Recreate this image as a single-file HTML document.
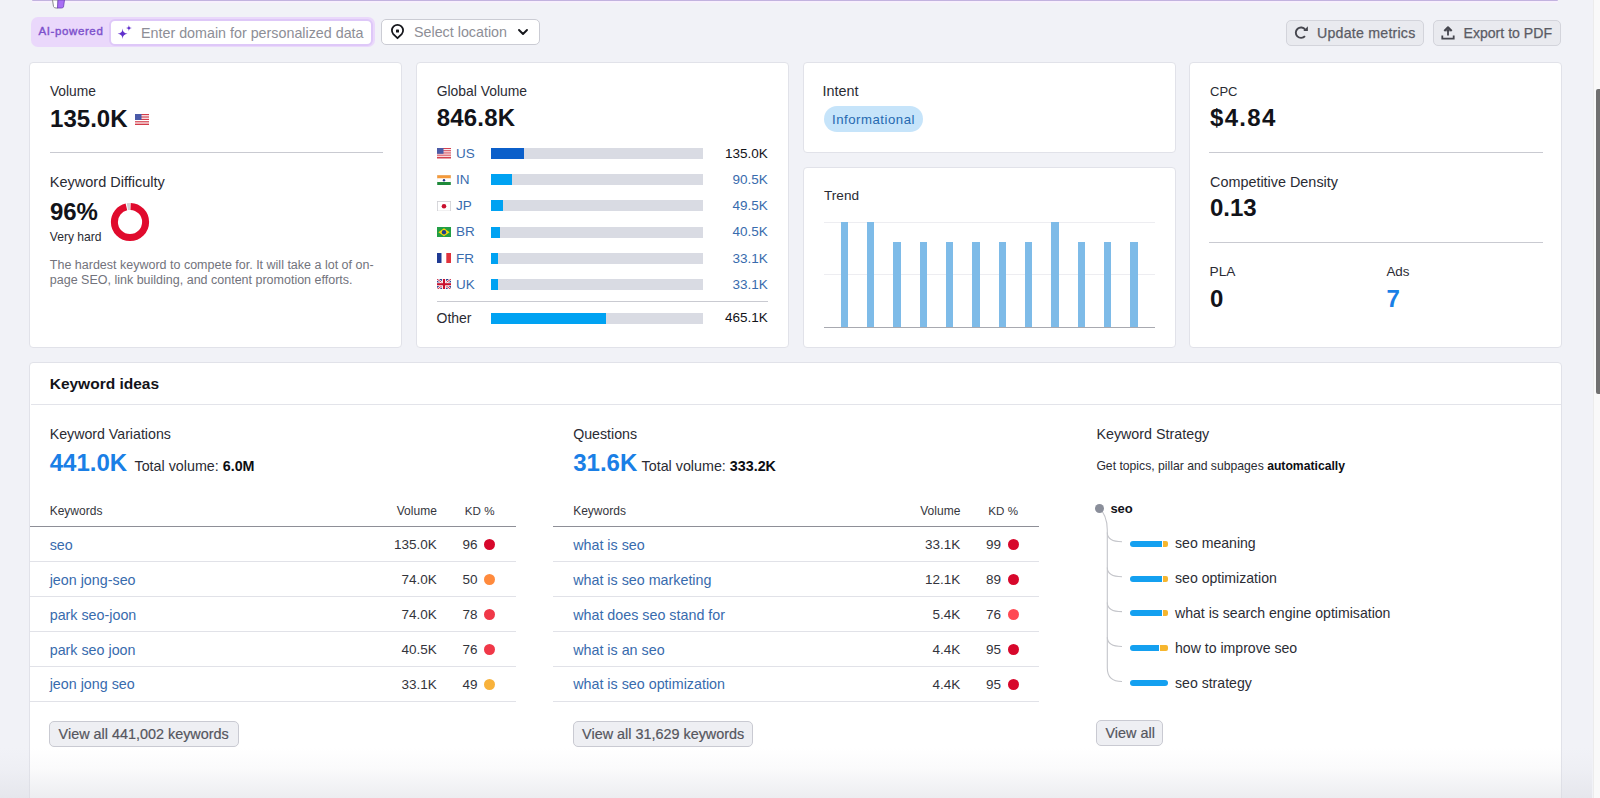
<!DOCTYPE html>
<html><head><meta charset="utf-8"><style>
html,body{margin:0;padding:0;width:1600px;height:798px;overflow:hidden;background:#f1f2f7;}
body{position:relative;font-family:"Liberation Sans", sans-serif;}
.t{position:absolute;white-space:nowrap;line-height:1;}
b{font-weight:700;}
</style></head><body>
<div style="position:absolute;left:32px;top:0px;width:1526px;height:1px;background:#c2b3df;border-radius:0 0 4px 4px;"></div>
<div style="position:absolute;left:32px;top:1px;width:1526px;height:1.5px;background:#f8f0fd;"></div>
<svg style="position:absolute;left:50px;top:0" width="18" height="10"><path d="M2.5 0 L3.5 6.5 Q4 8 6 8 L8 8 L8 0Z" fill="#fff" stroke="#8c8c90" stroke-width="1"/><path d="M8 0 L14.5 0 L13.5 7 Q13 8 11.5 8 L7.5 8Z" fill="#a86ef5" stroke="#6d42b5" stroke-width="0.8"/></svg>
<div style="position:absolute;left:30.5px;top:16.5px;width:344px;height:30px;background:#ead8fb;border-radius:7px;"></div>
<div class="t" style="left:38.40px;top:25.77px;font-size:11.5px;font-weight:400;color:#7d51cc;-webkit-text-stroke:0.4px #7d51cc;letter-spacing:0.62px;">AI-powered</div>
<div style="position:absolute;left:108.5px;top:18.5px;width:264.5px;height:27px;background:#fff;border:2px solid #dec8f8;border-radius:6px;box-sizing:border-box;"></div>
<svg style="position:absolute;left:116px;top:24px" width="18" height="16" viewBox="0 0 18 16"><path d="M6.6 4.6 Q6.8 9.6 11.6 9.8 Q6.8 10.0 6.6 15.0 Q6.4 10.0 1.6 9.8 Q6.4 9.6 6.6 4.6Z" fill="#6030cc"/><path d="M12.9 1.0 Q13.0 3.9 16.0 4.1 Q13.0 4.3 12.9 7.2 Q12.8 4.3 9.8 4.1 Q12.8 3.9 12.9 1.0Z" fill="#6030cc"/></svg>
<div class="t" style="left:141.00px;top:26.00px;font-size:14.3px;font-weight:400;color:#8d8e96;">Enter domain for personalized data</div>
<div style="position:absolute;left:381.2px;top:18.5px;width:158.6px;height:26.8px;background:#fff;border:1px solid #cbccd4;border-radius:5px;box-sizing:border-box;"></div>
<svg style="position:absolute;left:389px;top:23px" width="17" height="17" viewBox="0 0 17 17"><path d="M8.5 15.2 L4.3 11.1 A5.6 5.6 0 1 1 12.7 11.1 Z" fill="none" stroke="#16171c" stroke-width="1.8" stroke-linejoin="round"/><rect x="7" y="6.6" width="3" height="3" rx="0.6" fill="#16171c"/></svg>
<div class="t" style="left:414.00px;top:24.70px;font-size:14.3px;font-weight:400;color:#8d8e96;">Select location</div>
<svg style="position:absolute;left:517px;top:28px" width="12" height="8" viewBox="0 0 12 8"><path d="M2 2 L6 6 L10 2" fill="none" stroke="#16171c" stroke-width="1.9" stroke-linecap="round" stroke-linejoin="round"/></svg>
<div style="position:absolute;left:1286.2px;top:19.5px;width:138.3px;height:26.5px;background:#e9eaef;border:1px solid #d3d4db;border-radius:5px;box-sizing:border-box;"></div>
<svg style="position:absolute;left:1293px;top:25px" width="16" height="16" viewBox="0 0 16 16"><path d="M11.98 11.04 A5.2 5.2 0 1 1 12.2 4.6" fill="none" stroke="#45464e" stroke-width="1.9"/><path d="M10.3 6.0 L14.9 6.0 L14.9 1.3Z" fill="#45464e"/></svg>
<div class="t" style="left:1317.00px;top:26.48px;font-size:14.2px;font-weight:400;color:#5b5c65;letter-spacing:0.22px;-webkit-text-stroke:0.25px #5b5c65;">Update metrics</div>
<div style="position:absolute;left:1433px;top:19.5px;width:127.5px;height:26.5px;background:#e9eaef;border:1px solid #d3d4db;border-radius:5px;box-sizing:border-box;"></div>
<svg style="position:absolute;left:1440px;top:25px" width="16" height="16" viewBox="0 0 16 16"><path d="M8 10.6 L8 4.5" fill="none" stroke="#45464e" stroke-width="1.8"/><path d="M4.3 6.0 L8 2.2 L11.7 6.0" fill="none" stroke="#45464e" stroke-width="2" stroke-linejoin="round"/><path d="M5.7 6.2 L8 3.6 L10.3 6.2Z" fill="#45464e"/><path d="M2.3 10.4 L2.3 13.6 L13.7 13.6 L13.7 10.4" fill="none" stroke="#45464e" stroke-width="1.8"/></svg>
<div class="t" style="left:1463.50px;top:26.36px;font-size:14.1px;font-weight:400;color:#5b5c65;-webkit-text-stroke:0.25px #5b5c65;">Export to PDF</div>
<div style="position:absolute;left:29px;top:62px;width:373px;height:286px;background:#fff;border:1px solid #e1e2e9;border-radius:4px;box-sizing:border-box;"></div>
<div style="position:absolute;left:416px;top:62px;width:373px;height:286px;background:#fff;border:1px solid #e1e2e9;border-radius:4px;box-sizing:border-box;"></div>
<div style="position:absolute;left:803px;top:62px;width:373px;height:91px;background:#fff;border:1px solid #e1e2e9;border-radius:4px;box-sizing:border-box;"></div>
<div style="position:absolute;left:803px;top:167px;width:373px;height:181px;background:#fff;border:1px solid #e1e2e9;border-radius:4px;box-sizing:border-box;"></div>
<div style="position:absolute;left:1189px;top:62px;width:373px;height:286px;background:#fff;border:1px solid #e1e2e9;border-radius:4px;box-sizing:border-box;"></div>
<div class="t" style="left:49.90px;top:84.72px;font-size:13.8px;font-weight:400;color:#2a2b33;">Volume</div>
<div class="t" style="left:50.10px;top:106.58px;font-size:24px;font-weight:700;color:#121319;">135.0K</div>
<svg style="position:absolute;left:134.5px;top:113.8px" width="14" height="11" viewBox="0 0 14 11"><rect width="14" height="11" fill="#fff"/><g fill="#d33c4a"><rect y="0" width="14" height="1.2"/><rect y="2.4" width="14" height="1.2"/><rect y="4.8" width="14" height="1.2"/><rect y="7.2" width="14" height="1.2"/><rect y="9.6" width="14" height="1.4"/></g><rect width="6.5" height="6" fill="#4a5aa8"/></svg>
<div style="position:absolute;left:49.5px;top:152px;width:333px;height:1px;background:#c9cad1;"></div>
<div class="t" style="left:49.80px;top:174.53px;font-size:14.5px;font-weight:400;color:#2a2b33;">Keyword Difficulty</div>
<div class="t" style="left:49.90px;top:200.08px;font-size:24px;font-weight:700;color:#121319;">96%</div>
<div class="t" style="left:49.80px;top:230.86px;font-size:12.1px;font-weight:400;color:#2a2b33;">Very hard</div>
<svg style="position:absolute;left:109.8px;top:202.2px" width="40" height="40" viewBox="0 0 40 40"><circle cx="20" cy="20" r="15.6" fill="none" stroke="#e00b2d" stroke-width="7" stroke-dasharray="93.1 100" stroke-dashoffset="-0.6" transform="rotate(-90 20 20)"/><circle cx="20" cy="20" r="15.6" fill="none" stroke="#cfcfd3" stroke-width="7" stroke-dasharray="2.6 100" stroke-dashoffset="-94.7" transform="rotate(-90 20 20)"/></svg>
<div class="t" style="left:49.80px;top:258.72px;font-size:12.5px;font-weight:400;color:#72737c;">The hardest keyword to compete for. It will take a lot of on-</div>
<div class="t" style="left:49.80px;top:274.02px;font-size:12.5px;font-weight:400;color:#72737c;">page SEO, link building, and content promotion efforts.</div>
<div class="t" style="left:436.70px;top:84.63px;font-size:13.9px;font-weight:400;color:#2a2b33;">Global Volume</div>
<div class="t" style="left:436.70px;top:105.78px;font-size:24px;font-weight:700;color:#121319;letter-spacing:0.2px;">846.8K</div>
<svg style="position:absolute;left:437px;top:148.45px" width="14" height="10.5" viewBox="0 0 14 10.5"><rect width="14" height="10.5" fill="#fff"/><g fill="#d44150"><rect y="0" width="14" height="1.1"/><rect y="2.2" width="14" height="1.1"/><rect y="4.4" width="14" height="1.1"/><rect y="6.6" width="14" height="1.1"/><rect y="8.8" width="14" height="1.7"/></g><rect width="6.5" height="5.8" fill="#4b5ba7"/></svg>
<div class="t" style="left:456.10px;top:147.17px;font-size:13.5px;font-weight:400;color:#386bad;">US</div>
<div style="position:absolute;left:490.7px;top:148.2px;width:212.3px;height:11px;background:#d9dbe3;"></div>
<div style="position:absolute;left:490.7px;top:148.2px;width:33.3px;height:11px;background:#0b5fca;"></div>
<div class="t" style="right:832.20px;top:147.17px;font-size:13.5px;font-weight:400;color:#121319;">135.0K</div>
<svg style="position:absolute;left:437px;top:174.55px" width="14" height="10.5" viewBox="0 0 14 10.5"><rect width="14" height="3.5" fill="#f59a3a"/><rect y="3.5" width="14" height="3.5" fill="#fff"/><rect y="7" width="14" height="3.5" fill="#1e8a3a"/><circle cx="7" cy="5.25" r="1.2" fill="#2b3a8c"/><rect width="14" height="10.5" fill="none" stroke="#e2e2e2" stroke-width="0.5"/></svg>
<div class="t" style="left:456.10px;top:173.27px;font-size:13.5px;font-weight:400;color:#386bad;">IN</div>
<div style="position:absolute;left:490.7px;top:174.3px;width:212.3px;height:11px;background:#d9dbe3;"></div>
<div style="position:absolute;left:490.7px;top:174.3px;width:21.5px;height:11px;background:#00a2f2;"></div>
<div class="t" style="right:832.20px;top:173.27px;font-size:13.5px;font-weight:400;color:#386bad;">90.5K</div>
<svg style="position:absolute;left:437px;top:200.65px" width="14" height="10.5" viewBox="0 0 14 10.5"><rect x="0.4" y="0.4" width="13.2" height="9.7" fill="#fff" stroke="#cfcfd4" stroke-width="0.8"/><circle cx="7" cy="5.25" r="2.3" fill="#c8102e"/></svg>
<div class="t" style="left:456.10px;top:199.37px;font-size:13.5px;font-weight:400;color:#386bad;">JP</div>
<div style="position:absolute;left:490.7px;top:200.4px;width:212.3px;height:11px;background:#d9dbe3;"></div>
<div style="position:absolute;left:490.7px;top:200.4px;width:12.4px;height:11px;background:#00a2f2;"></div>
<div class="t" style="right:832.20px;top:199.37px;font-size:13.5px;font-weight:400;color:#386bad;">49.5K</div>
<svg style="position:absolute;left:437px;top:226.75px" width="14" height="10.5" viewBox="0 0 14 10.5"><rect width="14" height="10.5" fill="#229e45"/><path d="M7 1.3 L12.6 5.25 L7 9.2 L1.4 5.25Z" fill="#f8d70a"/><circle cx="7" cy="5.25" r="2.2" fill="#1f3f8a"/></svg>
<div class="t" style="left:456.10px;top:225.47px;font-size:13.5px;font-weight:400;color:#386bad;">BR</div>
<div style="position:absolute;left:490.7px;top:226.5px;width:212.3px;height:11px;background:#d9dbe3;"></div>
<div style="position:absolute;left:490.7px;top:226.5px;width:9.2px;height:11px;background:#00a2f2;"></div>
<div class="t" style="right:832.20px;top:225.47px;font-size:13.5px;font-weight:400;color:#386bad;">40.5K</div>
<svg style="position:absolute;left:437px;top:252.85px" width="14" height="10.5" viewBox="0 0 14 10.5"><rect width="4.7" height="10.5" fill="#1f3a93"/><rect x="4.7" width="4.6" height="10.5" fill="#fff"/><rect x="9.3" width="4.7" height="10.5" fill="#e0323c"/></svg>
<div class="t" style="left:456.10px;top:251.57px;font-size:13.5px;font-weight:400;color:#386bad;">FR</div>
<div style="position:absolute;left:490.7px;top:252.6px;width:212.3px;height:11px;background:#d9dbe3;"></div>
<div style="position:absolute;left:490.7px;top:252.6px;width:7.3px;height:11px;background:#00a2f2;"></div>
<div class="t" style="right:832.20px;top:251.57px;font-size:13.5px;font-weight:400;color:#386bad;">33.1K</div>
<svg style="position:absolute;left:437px;top:278.95px" width="14" height="10.5" viewBox="0 0 14 10.5"><rect width="14" height="10.5" fill="#2b3a8a"/><path d="M0 0 L14 10.5 M14 0 L0 10.5" stroke="#fff" stroke-width="2.4"/><path d="M0 0 L14 10.5 M14 0 L0 10.5" stroke="#c8102e" stroke-width="0.9"/><rect x="4.9" width="4.2" height="10.5" fill="#fff"/><rect y="3.4" width="14" height="3.7" fill="#fff"/><rect x="5.9" width="2.2" height="10.5" fill="#c8102e"/><rect y="4.2" width="14" height="2.1" fill="#c8102e"/></svg>
<div class="t" style="left:456.10px;top:277.67px;font-size:13.5px;font-weight:400;color:#386bad;">UK</div>
<div style="position:absolute;left:490.7px;top:278.7px;width:212.3px;height:11px;background:#d9dbe3;"></div>
<div style="position:absolute;left:490.7px;top:278.7px;width:7.3px;height:11px;background:#00a2f2;"></div>
<div class="t" style="right:832.20px;top:277.67px;font-size:13.5px;font-weight:400;color:#386bad;">33.1K</div>
<div style="position:absolute;left:436.5px;top:301px;width:331.5px;height:1px;background:#c9cad1;"></div>
<div class="t" style="left:436.50px;top:311.05px;font-size:14px;font-weight:400;color:#2a2b33;">Other</div>
<div style="position:absolute;left:490.7px;top:312.6px;width:212.3px;height:11px;background:#d9dbe3;"></div>
<div style="position:absolute;left:490.7px;top:312.6px;width:115.6px;height:11px;background:#00a2f2;"></div>
<div class="t" style="right:832.20px;top:311.47px;font-size:13.5px;font-weight:400;color:#121319;">465.1K</div>
<div class="t" style="left:822.60px;top:84.21px;font-size:14.4px;font-weight:400;color:#2a2b33;">Intent</div>
<div style="position:absolute;left:823.6px;top:105.9px;width:99.8px;height:26.3px;background:#c6e4fa;border-radius:14px;"></div>
<div class="t" style="left:832.00px;top:113.03px;font-size:13.2px;font-weight:400;color:#2569b0;letter-spacing:0.52px;">Informational</div>
<div class="t" style="left:824.00px;top:189.49px;font-size:13.6px;font-weight:400;color:#2a2b33;">Trend</div>
<div style="position:absolute;left:823.6px;top:221.5px;width:331.4px;height:1px;background:#ededf1;"></div>
<div style="position:absolute;left:823.6px;top:274px;width:331.4px;height:1px;background:#ededf1;"></div>
<div style="position:absolute;left:840.7px;top:221.7px;width:7.4px;height:105.3px;background:#7ebbe8;"></div>
<div style="position:absolute;left:867.04px;top:221.7px;width:7.4px;height:105.3px;background:#7ebbe8;"></div>
<div style="position:absolute;left:893.38px;top:242.1px;width:7.4px;height:84.9px;background:#7ebbe8;"></div>
<div style="position:absolute;left:919.72px;top:242.1px;width:7.4px;height:84.9px;background:#7ebbe8;"></div>
<div style="position:absolute;left:946.06px;top:242.1px;width:7.4px;height:84.9px;background:#7ebbe8;"></div>
<div style="position:absolute;left:972.4px;top:242.1px;width:7.4px;height:84.9px;background:#7ebbe8;"></div>
<div style="position:absolute;left:998.74px;top:242.1px;width:7.4px;height:84.9px;background:#7ebbe8;"></div>
<div style="position:absolute;left:1025.08px;top:242.1px;width:7.4px;height:84.9px;background:#7ebbe8;"></div>
<div style="position:absolute;left:1051.42px;top:221.7px;width:7.4px;height:105.3px;background:#7ebbe8;"></div>
<div style="position:absolute;left:1077.76px;top:242.1px;width:7.4px;height:84.9px;background:#7ebbe8;"></div>
<div style="position:absolute;left:1104.1px;top:242.1px;width:7.4px;height:84.9px;background:#7ebbe8;"></div>
<div style="position:absolute;left:1130.44px;top:242.1px;width:7.4px;height:84.9px;background:#7ebbe8;"></div>
<div style="position:absolute;left:823.6px;top:326.5px;width:331.4px;height:1px;background:#a8a9b0;"></div>
<div class="t" style="left:1210.00px;top:85.40px;font-size:13px;font-weight:400;color:#2a2b33;">CPC</div>
<div class="t" style="left:1210.00px;top:106.38px;font-size:24px;font-weight:700;color:#121319;letter-spacing:1.3px;">$4.84</div>
<div style="position:absolute;left:1209px;top:152px;width:334px;height:1px;background:#c9cad1;"></div>
<div class="t" style="left:1210.00px;top:174.61px;font-size:14.4px;font-weight:400;color:#2a2b33;">Competitive Density</div>
<div class="t" style="left:1210.00px;top:195.98px;font-size:24px;font-weight:700;color:#121319;">0.13</div>
<div style="position:absolute;left:1209px;top:242px;width:334px;height:1px;background:#c9cad1;"></div>
<div class="t" style="left:1209.60px;top:265.20px;font-size:13.7px;font-weight:400;color:#2a2b33;">PLA</div>
<div class="t" style="left:1386.40px;top:265.46px;font-size:13.4px;font-weight:400;color:#2a2b33;">Ads</div>
<div class="t" style="left:1210.00px;top:286.88px;font-size:24px;font-weight:700;color:#121319;">0</div>
<div class="t" style="left:1386.40px;top:286.88px;font-size:24px;font-weight:700;color:#1a7fe6;">7</div>
<div style="position:absolute;left:29px;top:362px;width:1533px;height:460px;background:#fff;border:1px solid #e1e2e9;border-radius:4px;box-sizing:border-box;"></div>
<div class="t" style="left:49.70px;top:376.38px;font-size:15.5px;font-weight:700;color:#121319;">Keyword ideas</div>
<div style="position:absolute;left:30.5px;top:404px;width:1530px;height:1px;background:#e3e4ea;"></div>
<div class="t" style="left:49.70px;top:426.98px;font-size:14.2px;font-weight:400;color:#2a2b33;">Keyword Variations</div>
<div class="t" style="left:49.70px;top:450.68px;font-size:24px;font-weight:700;color:#1a7fe6;">441.0K</div>
<div class="t" style="left:49.70px;top:504.54px;font-size:12px;font-weight:400;color:#34353c;">Keywords</div>
<div class="t" style="right:1163.20px;top:504.54px;font-size:12px;font-weight:400;color:#34353c;">Volume</div>
<div class="t" style="right:1105.50px;top:504.88px;font-size:11.6px;font-weight:400;color:#34353c;">KD %</div>
<div style="position:absolute;left:30px;top:526px;width:486px;height:1.2px;background:#8e8f97;"></div>
<div class="t" style="left:49.70px;top:537.80px;font-size:14.3px;font-weight:400;color:#386bad;">seo</div>
<div class="t" style="right:1163.20px;top:538.27px;font-size:13.5px;font-weight:400;color:#33343c;">135.0K</div>
<div class="t" style="right:1122.50px;top:538.27px;font-size:13.5px;font-weight:400;color:#33343c;">96</div>
<div style="position:absolute;left:484px;top:539.0px;width:11px;height:11px;background:#d7072b;border-radius:50%;"></div>
<div style="position:absolute;left:30px;top:561.4px;width:486px;height:1px;background:#e1e2e8;"></div>
<div class="t" style="left:49.70px;top:572.70px;font-size:14.3px;font-weight:400;color:#386bad;">jeon jong-seo</div>
<div class="t" style="right:1163.20px;top:573.17px;font-size:13.5px;font-weight:400;color:#33343c;">74.0K</div>
<div class="t" style="right:1122.50px;top:573.17px;font-size:13.5px;font-weight:400;color:#33343c;">50</div>
<div style="position:absolute;left:484px;top:573.9px;width:11px;height:11px;background:#ff8a3d;border-radius:50%;"></div>
<div style="position:absolute;left:30px;top:596.3px;width:486px;height:1px;background:#e1e2e8;"></div>
<div class="t" style="left:49.70px;top:607.60px;font-size:14.3px;font-weight:400;color:#386bad;">park seo-joon</div>
<div class="t" style="right:1163.20px;top:608.07px;font-size:13.5px;font-weight:400;color:#33343c;">74.0K</div>
<div class="t" style="right:1122.50px;top:608.07px;font-size:13.5px;font-weight:400;color:#33343c;">78</div>
<div style="position:absolute;left:484px;top:608.8px;width:11px;height:11px;background:#f03848;border-radius:50%;"></div>
<div style="position:absolute;left:30px;top:631.2px;width:486px;height:1px;background:#e1e2e8;"></div>
<div class="t" style="left:49.70px;top:642.50px;font-size:14.3px;font-weight:400;color:#386bad;">park seo joon</div>
<div class="t" style="right:1163.20px;top:642.97px;font-size:13.5px;font-weight:400;color:#33343c;">40.5K</div>
<div class="t" style="right:1122.50px;top:642.97px;font-size:13.5px;font-weight:400;color:#33343c;">76</div>
<div style="position:absolute;left:484px;top:643.7px;width:11px;height:11px;background:#f03848;border-radius:50%;"></div>
<div style="position:absolute;left:30px;top:666.1px;width:486px;height:1px;background:#e1e2e8;"></div>
<div class="t" style="left:49.70px;top:677.40px;font-size:14.3px;font-weight:400;color:#386bad;">jeon jong seo</div>
<div class="t" style="right:1163.20px;top:677.87px;font-size:13.5px;font-weight:400;color:#33343c;">33.1K</div>
<div class="t" style="right:1122.50px;top:677.87px;font-size:13.5px;font-weight:400;color:#33343c;">49</div>
<div style="position:absolute;left:484px;top:678.6px;width:11px;height:11px;background:#f8b23b;border-radius:50%;"></div>
<div style="position:absolute;left:30px;top:701.0px;width:486px;height:1px;background:#e1e2e8;"></div>
<div style="position:absolute;left:49.4px;top:721px;width:189.4px;height:26.2px;background:#eeeff3;border:1px solid #c9cad2;border-radius:5px;box-sizing:border-box;"></div>
<div class="t" style="left:58.60px;top:726.81px;font-size:14.4px;font-weight:400;color:#55565e;-webkit-text-stroke:0.2px #55565e;">View all 441,002 keywords</div>
<div class="t" style="left:134.50px;top:459.10px;font-size:14.3px;font-weight:400;color:#2a2b33;">Total volume: <b style='color:#0d0e13'>6.0M</b></div>
<div class="t" style="left:573.20px;top:426.98px;font-size:14.2px;font-weight:400;color:#2a2b33;">Questions</div>
<div class="t" style="left:573.20px;top:450.68px;font-size:24px;font-weight:700;color:#1a7fe6;">31.6K</div>
<div class="t" style="left:573.20px;top:504.54px;font-size:12px;font-weight:400;color:#34353c;">Keywords</div>
<div class="t" style="right:639.70px;top:504.54px;font-size:12px;font-weight:400;color:#34353c;">Volume</div>
<div class="t" style="right:582.00px;top:504.88px;font-size:11.6px;font-weight:400;color:#34353c;">KD %</div>
<div style="position:absolute;left:552.5px;top:526px;width:486px;height:1.2px;background:#8e8f97;"></div>
<div class="t" style="left:573.20px;top:537.80px;font-size:14.3px;font-weight:400;color:#386bad;">what is seo</div>
<div class="t" style="right:639.70px;top:538.27px;font-size:13.5px;font-weight:400;color:#33343c;">33.1K</div>
<div class="t" style="right:599.00px;top:538.27px;font-size:13.5px;font-weight:400;color:#33343c;">99</div>
<div style="position:absolute;left:1007.5px;top:539.0px;width:11px;height:11px;background:#d7072b;border-radius:50%;"></div>
<div style="position:absolute;left:552.5px;top:561.4px;width:486px;height:1px;background:#e1e2e8;"></div>
<div class="t" style="left:573.20px;top:572.70px;font-size:14.3px;font-weight:400;color:#386bad;">what is seo marketing</div>
<div class="t" style="right:639.70px;top:573.17px;font-size:13.5px;font-weight:400;color:#33343c;">12.1K</div>
<div class="t" style="right:599.00px;top:573.17px;font-size:13.5px;font-weight:400;color:#33343c;">89</div>
<div style="position:absolute;left:1007.5px;top:573.9px;width:11px;height:11px;background:#d7072b;border-radius:50%;"></div>
<div style="position:absolute;left:552.5px;top:596.3px;width:486px;height:1px;background:#e1e2e8;"></div>
<div class="t" style="left:573.20px;top:607.60px;font-size:14.3px;font-weight:400;color:#386bad;">what does seo stand for</div>
<div class="t" style="right:639.70px;top:608.07px;font-size:13.5px;font-weight:400;color:#33343c;">5.4K</div>
<div class="t" style="right:599.00px;top:608.07px;font-size:13.5px;font-weight:400;color:#33343c;">76</div>
<div style="position:absolute;left:1007.5px;top:608.8px;width:11px;height:11px;background:#ff4953;border-radius:50%;"></div>
<div style="position:absolute;left:552.5px;top:631.2px;width:486px;height:1px;background:#e1e2e8;"></div>
<div class="t" style="left:573.20px;top:642.50px;font-size:14.3px;font-weight:400;color:#386bad;">what is an seo</div>
<div class="t" style="right:639.70px;top:642.97px;font-size:13.5px;font-weight:400;color:#33343c;">4.4K</div>
<div class="t" style="right:599.00px;top:642.97px;font-size:13.5px;font-weight:400;color:#33343c;">95</div>
<div style="position:absolute;left:1007.5px;top:643.7px;width:11px;height:11px;background:#d7072b;border-radius:50%;"></div>
<div style="position:absolute;left:552.5px;top:666.1px;width:486px;height:1px;background:#e1e2e8;"></div>
<div class="t" style="left:573.20px;top:677.40px;font-size:14.3px;font-weight:400;color:#386bad;">what is seo optimization</div>
<div class="t" style="right:639.70px;top:677.87px;font-size:13.5px;font-weight:400;color:#33343c;">4.4K</div>
<div class="t" style="right:599.00px;top:677.87px;font-size:13.5px;font-weight:400;color:#33343c;">95</div>
<div style="position:absolute;left:1007.5px;top:678.6px;width:11px;height:11px;background:#d7072b;border-radius:50%;"></div>
<div style="position:absolute;left:552.5px;top:701.0px;width:486px;height:1px;background:#e1e2e8;"></div>
<div style="position:absolute;left:572.9px;top:721px;width:180px;height:26.2px;background:#eeeff3;border:1px solid #c9cad2;border-radius:5px;box-sizing:border-box;"></div>
<div class="t" style="left:582.10px;top:726.81px;font-size:14.4px;font-weight:400;color:#55565e;-webkit-text-stroke:0.2px #55565e;">View all 31,629 keywords</div>
<div class="t" style="left:641.60px;top:459.10px;font-size:14.3px;font-weight:400;color:#2a2b33;">Total volume: <b style='color:#0d0e13'>333.2K</b></div>
<div class="t" style="left:1096.40px;top:426.80px;font-size:14.3px;font-weight:400;color:#2a2b33;">Keyword Strategy</div>
<div class="t" style="left:1096.40px;top:460.07px;font-size:12.2px;font-weight:400;color:#2a2b33;">Get topics, pillar and subpages <b style='color:#0d0e13'>automatically</b></div>
<div class="t" style="left:1110.40px;top:502.20px;font-size:13px;font-weight:700;color:#121319;">seo</div>
<svg style="position:absolute;left:1090px;top:500px" width="60" height="200" viewBox="0 0 60 200"><g fill="none" stroke="#c4c5ca" stroke-width="1.1"><path d="M9 9 Q17 14 17.3 30 L17.3 168 Q17.3 181.5 32 181.5"/><path d="M17.3 32.6 Q17.3 41.8 32 41.8"/><path d="M17.3 67.5 Q17.3 76.7 32 76.7"/><path d="M17.3 102.4 Q17.3 111.6 32 111.6"/><path d="M17.3 137.3 Q17.3 146.5 32 146.5"/></g></svg>
<div style="position:absolute;left:1094.6px;top:504px;width:9px;height:9px;background:#8a8e9a;border-radius:50%;"></div>
<div style="position:absolute;left:1129.8px;top:540.6px;width:32.7px;height:6px;background:#14a0f0;border-radius:3px 0 0 3px;"></div>
<div style="position:absolute;left:1163.3px;top:540.6px;width:5.0px;height:6px;background:#f6b62f;border-radius:0 2px 2px 0;"></div>
<div class="t" style="left:1175.00px;top:536.46px;font-size:14.1px;font-weight:400;color:#2b2d35;">seo meaning</div>
<div style="position:absolute;left:1129.8px;top:575.5px;width:32.7px;height:6px;background:#14a0f0;border-radius:3px 0 0 3px;"></div>
<div style="position:absolute;left:1163.3px;top:575.5px;width:5.0px;height:6px;background:#f6b62f;border-radius:0 2px 2px 0;"></div>
<div class="t" style="left:1175.00px;top:571.36px;font-size:14.1px;font-weight:400;color:#2b2d35;">seo optimization</div>
<div style="position:absolute;left:1129.8px;top:610.4px;width:32.7px;height:6px;background:#14a0f0;border-radius:3px 0 0 3px;"></div>
<div style="position:absolute;left:1163.3px;top:610.4px;width:5.0px;height:6px;background:#f6b62f;border-radius:0 2px 2px 0;"></div>
<div class="t" style="left:1175.00px;top:606.26px;font-size:14.1px;font-weight:400;color:#2b2d35;">what is search engine optimisation</div>
<div style="position:absolute;left:1129.8px;top:645.3px;width:29.2px;height:6px;background:#14a0f0;border-radius:3px 0 0 3px;"></div>
<div style="position:absolute;left:1159.8px;top:645.3px;width:8.5px;height:6px;background:#f6b62f;border-radius:0 2px 2px 0;"></div>
<div class="t" style="left:1175.00px;top:641.16px;font-size:14.1px;font-weight:400;color:#2b2d35;">how to improve seo</div>
<div style="position:absolute;left:1129.8px;top:680.2px;width:38.5px;height:6px;background:#14a0f0;border-radius:3px;"></div>
<div class="t" style="left:1175.00px;top:676.06px;font-size:14.1px;font-weight:400;color:#2b2d35;">seo strategy</div>
<div style="position:absolute;left:1096px;top:720px;width:67.2px;height:26.2px;background:#eeeff3;border:1px solid #c9cad2;border-radius:5px;box-sizing:border-box;"></div>
<div class="t" style="left:1105.50px;top:726.31px;font-size:14.4px;font-weight:400;color:#55565e;-webkit-text-stroke:0.2px #55565e;">View all</div>
<div style="position:absolute;left:0px;top:748px;width:1592px;height:50px;background:linear-gradient(rgba(218,219,226,0),rgba(218,219,226,0.12) 40%,rgba(218,219,226,0.5));"></div>
<div style="position:absolute;left:1592.5px;top:0px;width:7.5px;height:798px;background:#f9f9f9;border-left:1px solid #ececec;box-sizing:border-box;"></div>
<div style="position:absolute;left:1596px;top:89px;width:4px;height:305px;background:#707070;border-radius:2px 0 0 2px;"></div>
</body></html>
